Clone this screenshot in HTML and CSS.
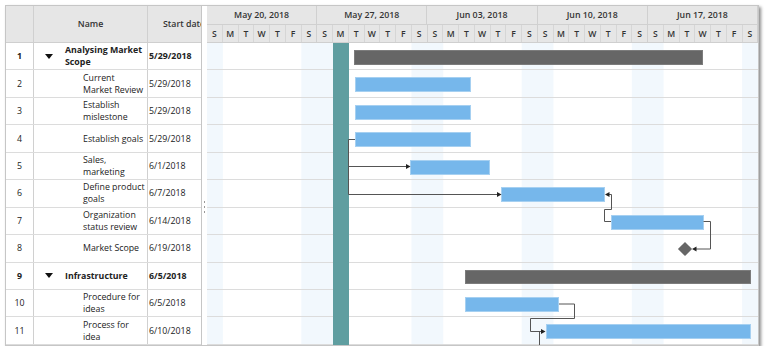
FILE: index.html
```html
<!DOCTYPE html>
<html lang="en">
<head>
    <meta charset="UTF-8">
    <meta name="viewport" content="width=device-width, initial-scale=1.0">
    <title>Project Gantt</title>
    <link rel="stylesheet" href="styles.css">
</head>
<body>
    <div class="gantt">
        <div class="grid">
            <div class="grid-head">
                <div class="cell id"></div>
                <div class="cell name">Name</div>
                <div class="cell date">Start date</div>
            </div>

            <div class="grid-row parent">
                <div class="cell id">1</div>
                <div class="cell name"><svg class="caret" width="8" height="5" viewBox="0 0 8 5"><polygon points="0,0 8,0 4,5"/></svg><span>Analysing Market Scope</span></div>
                <div class="cell date">5/29/2018</div>
            </div>
            <div class="grid-row">
                <div class="cell id">2</div>
                <div class="cell name"><span>Current Market Review</span></div>
                <div class="cell date">5/29/2018</div>
            </div>
            <div class="grid-row">
                <div class="cell id">3</div>
                <div class="cell name"><span>Establish mislestone</span></div>
                <div class="cell date">5/29/2018</div>
            </div>
            <div class="grid-row">
                <div class="cell id">4</div>
                <div class="cell name"><span>Establish goals</span></div>
                <div class="cell date">5/29/2018</div>
            </div>
            <div class="grid-row">
                <div class="cell id">5</div>
                <div class="cell name"><span>Sales, marketing</span></div>
                <div class="cell date">6/1/2018</div>
            </div>
            <div class="grid-row">
                <div class="cell id">6</div>
                <div class="cell name"><span>Define product goals</span></div>
                <div class="cell date">6/7/2018</div>
            </div>
            <div class="grid-row">
                <div class="cell id">7</div>
                <div class="cell name"><span>Organization status review</span></div>
                <div class="cell date">6/14/2018</div>
            </div>
            <div class="grid-row">
                <div class="cell id">8</div>
                <div class="cell name"><span>Market Scope</span></div>
                <div class="cell date">6/19/2018</div>
            </div>
            <div class="grid-row parent">
                <div class="cell id">9</div>
                <div class="cell name"><svg class="caret" width="8" height="5" viewBox="0 0 8 5"><polygon points="0,0 8,0 4,5"/></svg><span>Infrastructure</span></div>
                <div class="cell date">6/5/2018</div>
            </div>
            <div class="grid-row">
                <div class="cell id">10</div>
                <div class="cell name"><span>Procedure for ideas</span></div>
                <div class="cell date">6/5/2018</div>
            </div>
            <div class="grid-row">
                <div class="cell id">11</div>
                <div class="cell name"><span>Process for idea</span></div>
                <div class="cell date">6/10/2018</div>
            </div>
        </div>

        <div class="splitter"><div class="grip"></div></div>

        <div class="chart">
            <div class="chart-head">
                <div class="weeks">
                    <div class="week">May 20, 2018</div>
                    <div class="week">May 27, 2018</div>
                    <div class="week">Jun 03, 2018</div>
                    <div class="week">Jun 10, 2018</div>
                    <div class="week">Jun 17, 2018</div>
                </div>
                <div class="days">
                    <div class="day">S</div><div class="day">M</div><div class="day">T</div><div class="day">W</div><div class="day">T</div><div class="day">F</div><div class="day week-end">S</div>
                    <div class="day">S</div><div class="day">M</div><div class="day">T</div><div class="day">W</div><div class="day">T</div><div class="day">F</div><div class="day week-end">S</div>
                    <div class="day">S</div><div class="day">M</div><div class="day">T</div><div class="day">W</div><div class="day">T</div><div class="day">F</div><div class="day week-end">S</div>
                    <div class="day">S</div><div class="day">M</div><div class="day">T</div><div class="day">W</div><div class="day">T</div><div class="day">F</div><div class="day week-end">S</div>
                    <div class="day">S</div><div class="day">M</div><div class="day">T</div><div class="day">W</div><div class="day">T</div><div class="day">F</div><div class="day week-end">S</div>
                </div>
            </div>

            <div class="chart-body">
                <div class="today"></div>

                <div class="chart-row"><div class="bar summary" style="left: 147px; width: 349px;"></div></div>
                <div class="chart-row"><div class="bar" style="left: 148px; width: 116px;"></div></div>
                <div class="chart-row"><div class="bar" style="left: 148px; width: 116px;"></div></div>
                <div class="chart-row"><div class="bar" style="left: 148px; width: 116px;"></div></div>
                <div class="chart-row"><div class="bar" style="left: 203px; width: 80px;"></div></div>
                <div class="chart-row"><div class="bar" style="left: 294px; width: 104px;"></div></div>
                <div class="chart-row"><div class="bar" style="left: 404px; width: 92.5px;"></div></div>
                <div class="chart-row"><div class="milestone" style="left: 473px;"></div></div>
                <div class="chart-row"><div class="bar summary" style="left: 258px; width: 286px;"></div></div>
                <div class="chart-row"><div class="bar" style="left: 258px; width: 94px;"></div></div>
                <div class="chart-row"><div class="bar" style="left: 338.5px; width: 205.5px;"></div></div>

                <svg class="links" width="551" height="302" viewBox="0 0 551 302">
                    <!-- goals -> sales / product -->
                    <path d="M148 96.5 H141.5 V151.5 M141.5 123.5 H199 M141.5 151.5 H290"/>
                    <polygon points="199,121 203.5,123.5 199,126"/>
                    <polygon points="290,149 294.5,151.5 290,154"/>
                    <!-- status review -> product goals -->
                    <path d="M404 178.5 H397.5 V166.5 H404.5 V151.5 H402"/>
                    <polygon points="402.5,149 398,151.5 402.5,154"/>
                    <!-- status review -> market scope -->
                    <path d="M496.5 178.5 H503.5 V206 H489"/>
                    <polygon points="489.5,203.5 485,206 489.5,208.5"/>
                    <!-- procedure -> process -->
                    <path d="M352 261 H367.5 V275.5 H323.5 V288.5 H334 M332.5 288.5 V302"/>
                    <polygon points="334,286 338.5,288.5 334,291"/>
                </svg>
            </div>
        </div>
    </div>
</body>
</html>
```

FILE: styles.css
```css
* {
    box-sizing: border-box;
}

body {
    margin: 0;
    background-color: #fff;
    font-family: "Open Sans", "Noto Sans", sans-serif;
    font-size: 8.8px;
    color: #222;
}

.gantt {
    display: flex;
    margin: 5px 0 0 5px;
    width: 754px;
    height: 341px;
    border: 1px solid #c6c6c6;
    background-color: #fff;
    box-shadow: 2px 2px 3px rgba(0, 0, 0, 0.45);
    overflow: hidden;
}

/* left grid */

.grid {
    width: 196px;
    border-right: 1px solid #c6c6c6;
}

.grid-head,
.grid-row {
    display: grid;
    grid-template-columns: 28px 114px 53px;
}

.grid-head {
    height: 37px;
    background-color: #e6e6e6;
    border-bottom: 1px solid #cfcfcf;
    font-weight: 600;
    color: #333;
}

.grid-row {
    height: 27.45px;
    border-bottom: 1px solid #dcdcdc;
}

.cell {
    display: flex;
    align-items: center;
    overflow: hidden;
}

.cell.id,
.cell.name {
    border-right: 1px solid #d0d0d0;
}

.cell.id {
    justify-content: center;
}

.grid-head .cell.name {
    justify-content: center;
}

.grid-head .cell.date {
    padding-left: 15px;
    white-space: nowrap;
}

.grid-row .cell.name {
    padding: 0 2px 0 49px;
    line-height: 12px;
}

.grid-row.parent .cell.name {
    padding-left: 11px;
    gap: 12px;
}

.grid-row.parent {
    font-weight: 700;
}

.caret {
    flex: none;
    fill: #111;
}

.grid-row .cell.date {
    padding-left: 1px;
    white-space: nowrap;
}

.splitter {
    width: 5px;
    display: flex;
    justify-content: center;
}

.grip {
    width: 1px;
    height: 12px;
    margin-top: 195px;
    background: repeating-linear-gradient(#999 0 2px, transparent 2px 5px);
}

/* chart */

.chart {
    width: 551px;
    display: flex;
    flex-direction: column;
}

.chart-head {
    height: 37px;
    background-color: #e6e6e6;
    border-bottom: 1px solid #cfcfcf;
    color: #333;
    font-weight: 600;
}

.weeks {
    display: flex;
    height: 19px;
    border-bottom: 1px solid #d0d0d0;
}

.week {
    flex: 1;
    display: flex;
    align-items: center;
    justify-content: center;
    border-right: 1px solid #d0d0d0;
}

.days {
    display: flex;
    height: 17px;
}

.day {
    flex: 1;
    display: flex;
    align-items: center;
    justify-content: center;
    border-right: 1px solid #d6d6d6;
    font-size: 8.6px;
}

.day.week-end {
    border-right-color: #d0d0d0;
}

.chart-body {
    position: relative;
    flex: 1;
    background-image: linear-gradient(to right, #f2f8fd 0 14.2857%, transparent 14.2857% 85.7143%, #f2f8fd 85.7143%);
    background-size: 20% 100%;
    background-repeat: repeat-x;
}

.today {
    position: absolute;
    top: 0;
    bottom: 0;
    left: 125.9px;
    width: 15.74px;
    background-color: #5f9ea0;
    z-index: 1;
}

.chart-row {
    position: relative;
    height: 27.45px;
    border-bottom: 1px solid #dcdcdc;
}

.bar {
    position: absolute;
    top: 7px;
    height: 15px;
    background-color: #76b7eb;
    border: 1px solid #a6d0f1;
}

.bar.summary {
    height: 14.5px;
    background-color: #666;
    border-color: #7c7c7c;
}

.milestone {
    position: absolute;
    top: 8.7px;
    width: 10px;
    height: 10px;
    background-color: #666;
    transform: rotate(45deg);
}

.links {
    position: absolute;
    top: 0;
    left: 0;
    z-index: 2;
    pointer-events: none;
}

.links path {
    fill: none;
    stroke: #555;
    stroke-width: 1;
}

.links polygon {
    fill: #222;
}
```
